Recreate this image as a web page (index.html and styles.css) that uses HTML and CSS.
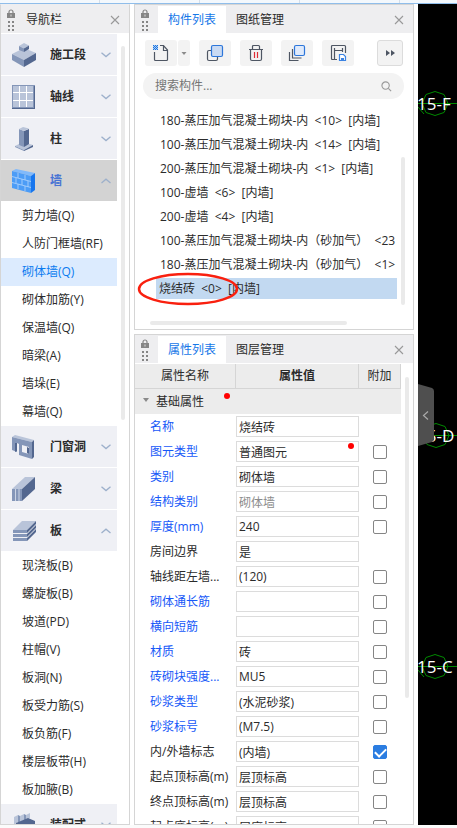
FILE: index.html
```html
<!DOCTYPE html>
<html lang="zh-CN">
<head>
<meta charset="utf-8">
<title>构件列表</title>
<link rel="stylesheet" href="styles.css">
</head>
<body>
<svg class="defs" aria-hidden="true">
  <symbol id="grip" viewBox="0 0 8 22">
    <path d="M2 5V3a2 2 0 0 1 4 0v2" fill="none" stroke="#858585" stroke-width="1.2"/>
    <path d="M0 4h8v5h-8z" fill="#858585"/><path d="M3.5 5.5h1v2h-1z" fill="#ddd"/>
    <path d="M1 12h2v2H1zM5 12h2v2H5zM1 16h2v2H1zM5 16h2v2H5zM1 20h2v2H1zM5 20h2v2H5z" fill="#858585"/>
  </symbol>
  <symbol id="close" viewBox="0 0 10 10"><path d="M1 1l8 8M9 1l-8 8" fill="none" stroke="#999" stroke-width="1.1"/></symbol>
  <symbol id="down" viewBox="0 0 10 6"><path d="M.5 .8L5 4.6 9.500 .8" fill="none" stroke="#9db0cb" stroke-width="1.3"/></symbol>
  <symbol id="up" viewBox="0 0 10 6"><path d="M.5 5L5 1.200 9.500 5" fill="none" stroke="#9db0cb" stroke-width="1.3"/></symbol>
</svg>
<div class="app">
  <div class="ribbon"><i></i><i></i><i></i><i></i></div>
  <div class="workspace">
    <nav class="panel nav">
      <header class="bar">
        <svg class="grip"><use href="#grip"/></svg>
        <span class="title">导航栏</span>
        <button class="close" aria-label="关闭导航栏"><svg><use href="#close"/></svg></button>
      </header>
      <div class="tree">
        <button class="cat">
          <svg class="pic" viewBox="0 0 24 24"><path d="M0 11L12 5l12 5-12 7z" fill="#b9c4d9"/><path d="M0 11l12 6v7L0 17z" fill="#8496b8"/><path d="M12 17l12-7v7l-12 7z" fill="#53678f"/><path d="M7 3l5-3 5 2.500-5 3z" fill="#b9c4d9"/><path d="M7 3l5 2.500V9L7 7z" fill="#8496b8"/><path d="M12 5.500l5-3V6l-5 3z" fill="#53678f"/></svg>
          <b>施工段</b><svg class="chev"><use href="#down"/></svg></button>
        <button class="cat">
          <svg class="pic" viewBox="0 0 24 24"><path d="M0 0h23v24H0z" fill="#8496b8"/><path d="M1 1h20v21H1z" fill="#b9c4d9"/><path d="M22 1h1v23H0v-1h22z" fill="#53678f"/><path d="M7.500 1v21M14.500 1v21M1 7.500h20M1 15.500h20" stroke="#fff" stroke-width="1"/></svg>
          <b>轴线</b><svg class="chev"><use href="#down"/></svg></button>
        <button class="cat">
          <svg class="pic" viewBox="0 0 24 24"><path d="M3 19l8-4 10 3-9 5z" fill="#b9c4d9"/><path d="M3 19l9 4v1l-9-4z" fill="#8496b8"/><path d="M12 23l9-5v2l-9 4z" fill="#53678f"/><path d="M7 2l5 2v16l-5-2z" fill="#8496b8"/><path d="M12 4l5-2v15l-5 3z" fill="#53678f"/><path d="M7 2l4-2 6 1.500L12 4z" fill="#b9c4d9"/></svg>
          <b>柱</b><svg class="chev"><use href="#down"/></svg></button>
        <button class="cat current">
          <svg class="pic" viewBox="0 0 24 24"><path d="M0 2l4-2 19 4-4 3z" fill="#80b9fb"/><path d="M0 2l19 5v17L0 19z" fill="#4c9cf6"/><path d="M19 7l4-3v17l-4 3z" fill="#1776ee"/><path d="M0 7.500l19 5M0 13.500l19 5M6 4v5M13 6v5M4 9v5M10 10v6M16 12v6M6 15v5M13 17v5" stroke="#a9d0fc" stroke-width=".9"/></svg>
          <b>墙</b><svg class="chev"><use href="#up"/></svg></button>
        <ul>
          <li><button>剪力墙(Q)</button></li><li><button>人防门框墙(RF)</button></li><li><button class="picked">砌体墙(Q)</button></li><li><button>砌体加筋(Y)</button></li><li><button>保温墙(Q)</button></li><li><button>暗梁(A)</button></li><li><button>墙垛(E)</button></li><li><button>幕墙(Q)</button></li>
        </ul>
        <button class="cat">
          <svg class="pic" viewBox="0 0 24 24"><path d="M0 2l3-2 19 5-2 2z" fill="#b9c4d9"/><path fill-rule="evenodd" d="M0 2l20 5v17l-13-4V9L5 8v9l-5-2zM10 10v7l7 2v-7z" fill="#8496b8"/><path d="M20 7l2-2v17l-2 2z" fill="#53678f"/><path d="M3 8l2 0v8l-2 1zM15 12l2 1v6l-2-1z" fill="#53678f"/></svg>
          <b>门窗洞</b><svg class="chev"><use href="#down"/></svg></button>
        <button class="cat">
          <svg class="pic" viewBox="0 0 24 24"><path d="M0 12L13 0h10L10 12z" fill="#b9c4d9"/><path d="M0 12h10v12H0z" fill="#8496b8"/><path d="M10 12L23 0v12L10 24z" fill="#53678f"/><path d="M3.500 12v12M7 12v12" stroke="#cbd4e4"/></svg>
          <b>梁</b><svg class="chev"><use href="#down"/></svg></button>
        <button class="cat">
          <svg class="pic" viewBox="0 0 24 24"><path d="M1 11l9-9h14l-9 9z" fill="#b9c4d9"/><path d="M1 11h14v3H1zM1 15h14v3H1zM1 19h14v3H1z" fill="#8496b8"/><path d="M15 11l9-9v3l-9 9zM15 15l9-9v3l-9 9zM15 19l9-9v3l-9 9z" fill="#53678f"/></svg>
          <b>板</b><svg class="chev"><use href="#up"/></svg></button>
        <ul>
          <li><button>现浇板(B)</button></li><li><button>螺旋板(B)</button></li><li><button>坡道(PD)</button></li><li><button>柱帽(V)</button></li><li><button>板洞(N)</button></li><li><button>板受力筋(S)</button></li><li><button>板负筋(F)</button></li><li><button>楼层板带(H)</button></li><li><button>板加腋(B)</button></li>
        </ul>
        <button class="cat">
          <svg class="pic" viewBox="0 0 24 24"><path d="M2 4l4-2v7l-4 3zM8 3l4-2v6l-4 2zM14 2l4-2v5l-4 2z" fill="#b9c4d9"/><path d="M6 2l2 1v6l-2 1zM12 1l2 1v5h-2z" fill="#8496b8"/><path d="M4 10l12-5 7 3v6l-10 8-9-5z" fill="#53678f"/></svg>
          <b>装配式</b><svg class="chev"><use href="#down"/></svg></button>
      </div>
      <i class="thumb nav-thumb"></i>
    </nav>

    <main class="middle">
      <section class="panel parts">
        <header class="bar">
          <svg class="grip"><use href="#grip"/></svg>
          <button class="tab on">构件列表</button><button class="tab">图纸管理</button>
          <button class="close" aria-label="关闭构件列表"><svg><use href="#close"/></svg></button>
        </header>
        <div class="tools">
          <div class="split">
            <button class="tool" aria-label="新建"><svg viewBox="0 0 18 18"><path d="M2.500 8v7.500q0 1 1 1h11q1 0 1-1V6l-4-4.500H8M11.500 2v4.500h4" fill="none" stroke="#4e5663" stroke-width="1.200"/><path d="M1 1h5v5H1z" fill="#a9cdf6"/><path d="M1 1h1v1H1zM3 1h1v1H3zM5 1h1v1H5zM2 2h1v1H2zM4 2h1v1H4zM1 3h1v1H1zM3 3h1v1H3zM5 3h1v1H5zM2 4h1v1H2zM4 4h1v1H4zM1 5h1v1H1zM3 5h1v1H3zM5 5h1v1H5z" fill="#1d74de"/></svg></button>
            <button class="tool drop" aria-label="新建选项"><svg viewBox="0 0 6 18"><path d="M.5 8h5L3 11z" fill="#8a8a8a"/></svg></button>
          </div>
          <button class="tool" aria-label="复制"><svg viewBox="0 0 18 18"><rect x="1.500" y="6.500" width="10" height="10" rx="1.500" fill="none" stroke="#4e5663" stroke-width="1.200"/><rect x="5.500" y="1.500" width="11" height="11" rx="1.500" fill="#c9daf3" stroke="#2c76da" stroke-width="1.200"/></svg></button>
          <button class="tool" aria-label="删除"><svg viewBox="0 0 18 18"><path d="M2 5.500h14M5.500 5V2.500q0-1 1-1h5q1 0 1 1V5M3.500 6v9q0 1.500 1.500 1.500h8q1.500 0 1.500-1.500V6" fill="none" stroke="#4e5663" stroke-width="1.200"/><path d="M7.500 8v6M10.500 8v6" stroke="#e02b35" stroke-width="1.200"/></svg></button>
          <button class="tool" aria-label="层间复制"><svg viewBox="0 0 18 18"><path d="M1.500 8v8.500h9M4.500 5v9h9" fill="none" stroke="#4e5663" stroke-width="1.200"/><rect x="6.500" y="1.500" width="10" height="10" rx="1.500" fill="#dfeafb" stroke="#2c76da" stroke-width="1.200"/></svg></button>
          <button class="tool" aria-label="存档"><svg viewBox="0 0 18 18"><path d="M8 15.500H3.500q-1 0-1-1v-12q0-1 1-1h12q1 0 1 1V9M5.500 4v11M5.500 6.500h8M13.500 4v4" fill="none" stroke="#4e5663" stroke-width="1.200"/><path d="M10.500 10.500h4l2 2v4h-6z" fill="#fff" stroke="#3b83e2" stroke-width="1.200"/><path d="M12 14h3v3h-3z" fill="#3b83e2"/></svg></button>
          <button class="tool more" aria-label="更多"><svg viewBox="0 0 18 18"><path d="M5 6l4 3-4 3zM10 6l4 3-4 3z" fill="#4e5663"/></svg></button>
        </div>
        <label class="search"><input type="text" placeholder="搜索构件..." aria-label="搜索构件"><svg viewBox="0 0 12 12"><circle cx="5" cy="5" r="4" fill="none" stroke="#999" stroke-width="1.200"/><path d="M8 8l3 3" stroke="#999" stroke-width="1.300"/></svg></label>
        <ul class="list">
          <li>180-蒸压加气混凝土砌块-内&nbsp; &lt;10&gt;&nbsp; [内墙]</li>
          <li>100-蒸压加气混凝土砌块-内&nbsp; &lt;14&gt;&nbsp; [内墙]</li>
          <li>200-蒸压加气混凝土砌块-内&nbsp; &lt;1&gt;&nbsp; [内墙]</li>
          <li>100-虚墙&nbsp; &lt;6&gt;&nbsp; [内墙]</li>
          <li>200-虚墙&nbsp; &lt;4&gt;&nbsp; [内墙]</li>
          <li>100-蒸压加气混凝土砌块-内（砂加气）&nbsp; &lt;23</li>
          <li>180-蒸压加气混凝土砌块-内（砂加气）&nbsp; &lt;1&gt;</li>
          <li class="chosen">烧结砖&nbsp; &lt;0&gt;&nbsp; [内墙]<svg class="ring" viewBox="0 0 102 34"><ellipse cx="51" cy="17" rx="49" ry="15" fill="none" stroke="#f9200f" stroke-width="2.500"/></svg></li>
        </ul>
        <i class="thumb list-thumb"></i><i class="thumb across"></i>
      </section>

      <section class="panel props">
        <header class="bar">
          <svg class="grip"><use href="#grip"/></svg>
          <button class="tab on">属性列表</button><button class="tab">图层管理</button>
          <button class="close" aria-label="关闭属性列表"><svg><use href="#close"/></svg></button>
        </header>
        <table>
          <colgroup><col class="c-name"><col><col class="c-add"></colgroup>
          <thead><tr><th>属性名称</th><th class="strong">属性值</th><th>附加</th></tr></thead>
          <tbody>
            <tr class="group"><td colspan="3"><svg viewBox="0 0 6 4"><path d="M0 0h6L3 4z" fill="#8a8a8a"/></svg>基础属性<i class="dot"></i></td></tr>
            <tr class="key"><td><label for="p1">名称</label></td><td><input id="p1" type="text" value="烧结砖"></td><td></td></tr>
            <tr class="key"><td><label for="p2">图元类型</label></td><td class="marked"><input id="p2" type="text" value="普通图元"><i class="dot"></i></td><td><input type="checkbox" aria-label="附加图元类型"></td></tr>
            <tr class="key"><td><label for="p3">类别</label></td><td><input id="p3" type="text" value="砌体墙"></td><td><input type="checkbox" aria-label="附加类别"></td></tr>
            <tr class="key"><td><label for="p4">结构类别</label></td><td><input id="p4" class="dim" type="text" value="砌体墙"></td><td><input type="checkbox" aria-label="附加结构类别"></td></tr>
            <tr class="key"><td><label for="p5">厚度(mm)</label></td><td><input id="p5" type="text" value="240"></td><td><input type="checkbox" aria-label="附加厚度"></td></tr>
            <tr><td><label for="p6">房间边界</label></td><td><input id="p6" type="text" value="是"></td><td></td></tr>
            <tr><td><label for="p7">轴线距左墙...</label></td><td><input id="p7" type="text" value="(120)"></td><td><input type="checkbox" aria-label="附加轴线距左墙"></td></tr>
            <tr class="key"><td><label for="p8">砌体通长筋</label></td><td><input id="p8" type="text"></td><td><input type="checkbox" aria-label="附加砌体通长筋"></td></tr>
            <tr class="key"><td><label for="p9">横向短筋</label></td><td><input id="p9" type="text"></td><td><input type="checkbox" aria-label="附加横向短筋"></td></tr>
            <tr class="key"><td><label for="p10">材质</label></td><td><input id="p10" type="text" value="砖"></td><td><input type="checkbox" aria-label="附加材质"></td></tr>
            <tr class="key"><td><label for="p11">砖砌块强度...</label></td><td><input id="p11" type="text" value="MU5"></td><td><input type="checkbox" aria-label="附加砖砌块强度"></td></tr>
            <tr class="key"><td><label for="p12">砂浆类型</label></td><td><input id="p12" type="text" value="(水泥砂浆)"></td><td><input type="checkbox" aria-label="附加砂浆类型"></td></tr>
            <tr class="key"><td><label for="p13">砂浆标号</label></td><td><input id="p13" type="text" value="(M7.5)"></td><td><input type="checkbox" aria-label="附加砂浆标号"></td></tr>
            <tr><td><label for="p14">内/外墙标志</label></td><td><input id="p14" type="text" value="(内墙)"></td><td><input type="checkbox" checked aria-label="附加内外墙标志"></td></tr>
            <tr><td><label for="p15">起点顶标高(m)</label></td><td><input id="p15" type="text" value="层顶标高"></td><td><input type="checkbox" aria-label="附加起点顶标高"></td></tr>
            <tr><td><label for="p16">终点顶标高(m)</label></td><td><input id="p16" type="text" value="层顶标高"></td><td><input type="checkbox" aria-label="附加终点顶标高"></td></tr>
            <tr><td><label for="p17">起点底标高(m)</label></td><td><input id="p17" type="text" value="层底标高"></td><td><input type="checkbox" aria-label="附加起点底标高"></td></tr>
          </tbody>
        </table>
        <i class="thumb props-thumb"></i>
      </section>
    </main>

    <aside class="drawing">
      <svg class="axes" width="39" height="821">
        <g fill="none" stroke="#008a00">
          <path d="M0 99.500h39M17 87.500l9 3 4 9-4 9-9 3-9-3-4-9 4-9zM0 103l6 7"/>
          <path d="M0 431.500h39M18 419.500l9 3 4 9-4 9-9 3-9-3-4-9 4-9z"/>
          <path d="M0 662.500h39M17 650.500l9 3 4 9-4 9-9 3-9-3-4-9 4-9zM0 666l6 7"/>
        </g>
        <g class="axis-name"><text x="-1" y="106">15-F</text><text x="-1" y="438">15-D</text><text x="-1" y="669">15-C</text></g>
      </svg>
      <button class="handle" aria-label="展开"><svg viewBox="0 0 16 62"><path d="M0 0l14 4q2 1 2 3v48q0 2-2 3L0 62z" fill="#4f4f4f"/><path d="M10 27.500L5.500 31.500l4.500 4" fill="none" stroke="#aaa" stroke-width="1.200"/></svg></button>
    </aside>
  </div>
</div>
</body>
</html>
```

FILE: styles.css
```css
* { box-sizing: border-box; }
body { margin: 0; background: #fbfbfb; color: #2b2b2b; font: 12px/18px "Open Sans", "Noto Sans CJK SC", sans-serif; }
button, input { font: inherit; color: inherit; border: 0; padding: 0; margin: 0; background: none; }
svg { display: block; flex: none; }
ul { list-style: none; margin: 0; padding: 0; }
.defs { position: absolute; width: 0; height: 0; }

.app { display: flex; flex-direction: column; height: 100vh; padding-bottom: 3px; overflow: hidden; }
.ribbon { display: grid; grid-template-columns: 100px 100px 100px 100px 1fr; flex: none; height: 4px; background: #f3f8fd; border-bottom: 1px solid #8fbdea; }
.ribbon i { border-right: 1px solid #d5dee8; }
.workspace { flex: 1; min-height: 0; display: grid; grid-template-columns: 130px minmax(0, 1fr) 39px; gap: 4px; background: #fff; }
.panel { position: relative; display: flex; flex-direction: column; min-height: 0; overflow: hidden; border: 1px solid #d5d5d5; background: #fff; }
.bar { display: flex; align-items: center; flex: none; height: 28px; padding-top: 1px; background: #eeeef0; }
.grip { width: 8px; height: 22px; margin: 0 8px 0 6px; }
.title { flex: 1; padding-left: 3px; }
.close { margin-left: auto; padding: 0 9px; }
.close svg { width: 10px; height: 10px; }
.thumb { position: absolute; width: 4px; border-radius: 2px; background: #eaeaea; }

/* navigation tree */
.nav { border-top-color: #eeeef0; }
.tree { display: flex; flex-direction: column; margin-right: 12px; padding-top: 1px; }
.cat { display: flex; align-items: center; flex: none; height: 41px; margin-bottom: 1px; padding: 0 6px 0 11px; background: #eff0f5; text-align: left; }
.cat b { flex: 1; padding-left: 14px; }
.pic { width: 24px; height: 24px; }
.chev { width: 10px; height: 6px; }
.cat.current { background: #d3d3d3; color: #4874d4; }
.tree li button { display: block; width: 100%; height: 28px; padding-left: 21px; text-align: left; }
.tree .picked { background: #dcebfe; color: #0b7bf0; }
.nav-thumb { top: 41px; right: 4px; height: 374px; }

/* component list */
.middle { display: grid; grid-template-rows: 326px minmax(0, 1fr); gap: 4px; min-height: 0; }
.middle .grip { margin-right: 9px; }
.tab { align-self: stretch; width: 68px; }
.tab.on { background: #fff; color: #1677e8; }
.tools { display: flex; gap: 9px; flex: none; padding: 7px 10px; }
.split { display: flex; gap: 1px; }
.tool { display: flex; align-items: center; justify-content: center; width: 32px; height: 26px; border-radius: 3px; background: #f3f3f3; }
.tool svg { width: 18px; height: 18px; }
.tool.drop { width: 12px; }
.tool.drop svg { width: 6px; }
.tool.more { width: 26px; margin-left: auto; border: 1px solid #dcdcdc; }
.search { display: flex; align-items: center; flex: none; height: 26px; margin: 0 9px 0 8px; padding: 0 12px; border-radius: 13px; background: #f3f3f3; }
.search input { flex: 1; min-width: 0; outline: 0; }
.search input::placeholder { color: #757575; opacity: 1; }
.search svg { width: 11px; height: 11px; }
.list { margin: 10px 16px 0 21px; }
.list li { height: 24px; padding-left: 4px; line-height: 24px; white-space: nowrap; }
.list .chosen { position: relative; height: 21px; margin-top: 1px; padding-left: 3px; background: #c2d9f1; line-height: 21px; }
.ring { position: absolute; left: -19px; top: -6px; width: 102px; height: 34px; }
.list-thumb { top: 152px; right: 8px; height: 148px; }
.across { left: 15px; bottom: 4px; width: 197px; height: 4px; }

/* property table */
table { flex: none; width: calc(100% - 12px); margin-top: 1px; border-collapse: separate; border-spacing: 0; table-layout: fixed; }
.c-name { width: 101px; }
.c-add { width: 42px; }
th { height: 25px; padding: 0; border: solid #d5d5d5; border-width: 0 1px 1px 0; background: #ececec; font-weight: 400; }
th.strong { font-weight: 700; }
td { height: 25px; padding: 0; }
td label { display: block; padding-left: 15px; white-space: nowrap; }
.key label { color: #1658f8; }
td input[type="text"] { display: block; width: 100%; height: 21px; padding: 0 2px; border: 1px solid #dcdcdc; background: #fff; }
td .dim { color: #8c8c8c; }
td:last-child { text-align: center; }
input[type="checkbox"] { appearance: none; display: block; width: 14px; height: 14px; margin: 0 auto; border: 1px solid #858585; border-radius: 2px; background: #fff; }
input[type="checkbox"]:checked { border-color: #2b7de1; background: #2b7de1; }
input[type="checkbox"]:checked::after { content: ""; display: block; width: 5px; height: 9px; margin: 0 auto; border: solid #fff; border-width: 0 2px 2px 0; transform: rotate(45deg); }
.group td { position: relative; height: 25px; padding-left: 21px; background: #ececec; text-align: left; }
.group td:last-child { text-align: left; }
.group svg { position: absolute; left: 8px; top: 9px; width: 6px; height: 4px; }
.dot { position: absolute; width: 6px; height: 6px; border-radius: 50%; background: #f00; }
.group .dot { left: 89px; top: 4px; }
.marked { position: relative; }
.marked .dot { right: 5px; top: 4px; }
.props-thumb { top: 42px; right: 4px; height: 321px; }

/* drawing area */
.drawing { position: relative; overflow: hidden; background: #000; }
.axis-name { fill: #fff; font: 17px "Open Sans", sans-serif; }
.handle { position: absolute; left: 0; top: 380px; }
.handle svg { width: 16px; height: 62px; }
```
